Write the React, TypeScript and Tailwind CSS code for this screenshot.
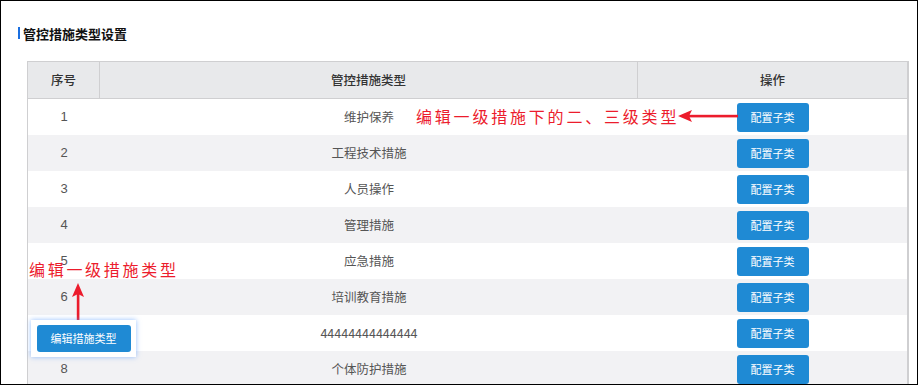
import React from "react";

const rows = [
  "维护保养",
  "工程技术措施",
  "人员操作",
  "管理措施",
  "应急措施",
  "培训教育措施",
  "44444444444444",
  "个体防护措施",
];

const font = { fontFamily: '"Noto Sans CJK SC", "Noto Sans", sans-serif' };

export default function App() {
  return (
    <div className="relative w-[919px] h-[386px] overflow-hidden bg-white" style={font}>
      <div className="w-[918px] h-[385px] border border-black overflow-hidden">
        <div className="flex items-center h-[14px] mt-[25px] ml-[17px]">
          <div className="w-[2px] h-[12px] bg-[#1a6fe0]" />
          <span className="ml-[3px] text-[13px] font-semibold text-[#111] leading-none">管控措施类型设置</span>
        </div>
        <div className="ml-[26px] mr-[8px] mt-[21px] border border-[#cfcfd1] border-r-2">
          <div className="grid grid-cols-[72px_538px_1fr] h-[37px] bg-[#e8e9eb] border-b border-[#cfcfd1] text-[12.5px] text-[#333] font-medium">
            <div className="flex items-center justify-center border-r border-[#cfcfd1]">序号</div>
            <div className="flex items-center justify-center border-r border-[#cfcfd1]">管控措施类型</div>
            <div className="flex items-center justify-center">操作</div>
          </div>
          {rows.map((name, i) => (
            <div
              key={i}
              className={`grid grid-cols-[72px_538px_1fr] h-[36px] text-[12.5px] text-[#555] ${i % 2 === 0 ? "bg-white" : "bg-[#f2f2f4]"}`}
            >
              <div className="flex items-center justify-center text-[13px]" style={{ fontFamily: '"Liberation Sans", sans-serif' }}>{i + 1}</div>
              <div className="flex items-center justify-center">{name}</div>
              <div className="flex items-center justify-center">
                <button className="w-[72px] h-[29px] rounded-[3px] bg-[#1f8ad4] text-white text-[11px] leading-none">配置子类</button>
              </div>
            </div>
          ))}
        </div>
      </div>

      {/* Annotation 1 */}
      <div className="absolute left-[416px] top-[105px] flex items-center">
        <span className="text-[16px] leading-[22px] tracking-[2.8px] text-[#ec1c2c]">编辑一级措施下的二、三级类型</span>
      </div>
      <svg className="absolute left-[677px] top-[109px]" width="61" height="14" viewBox="0 0 61 14">
        <polygon points="1,7 15,1 12,7 15,13" fill="#ec1c2c" />
        <rect x="11" y="5.8" width="50" height="2.6" fill="#ec1c2c" />
      </svg>

      {/* Annotation 2 */}
      <div className="absolute left-[29px] top-[257px]">
        <span className="text-[16px] leading-[22px] tracking-[2.7px] text-[#ec1c2c]">编辑一级措施类型</span>
      </div>
      <svg className="absolute left-[71px] top-[281px]" width="14" height="48" viewBox="0 0 14 48">
        <polygon points="7,2 13,16 7,13 1,16" fill="#ec1c2c" />
        <rect x="5.8" y="12" width="2.6" height="36" fill="#ec1c2c" />
      </svg>

      <div className="absolute left-[31px] top-[320px] w-[105px] h-[37px] bg-white shadow-[0_0_5px_rgba(80,150,255,0.6)] flex items-center justify-center">
        <button className="w-[94px] h-[27px] rounded-[3px] bg-[#1f8ad4] text-white text-[11px] leading-none">编辑措施类型</button>
      </div>
    </div>
  );
}
